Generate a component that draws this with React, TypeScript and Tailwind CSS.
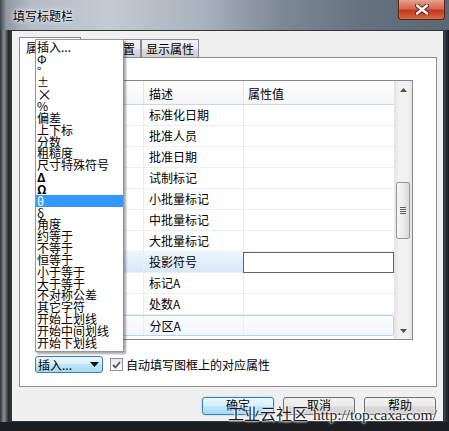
import React from "react";

const rows = [
  "标准化日期",
  "批准人员",
  "批准日期",
  "试制标记",
  "小批量标记",
  "中批量标记",
  "大批量标记",
  "投影符号",
  "标记A",
  "处数A",
  "分区A",
];

const menuItems = [
  "插入...",
  "Φ",
  "°",
  "±",
  "×",
  "%",
  "偏差",
  "上下标",
  "分数",
  "粗糙度",
  "尺寸特殊符号",
  "Δ",
  "Ω",
  "θ",
  "δ",
  "角度",
  "约等于",
  "不等于",
  "恒等于",
  "小于等于",
  "大于等于",
  "不对称公差",
  "其它字符",
  "开始上划线",
  "开始中间划线",
  "开始下划线",
];

function Arrow({ up }: { up?: boolean }) {
  return (
    <svg width="7" height="4" viewBox="0 0 7 4">
      <path d={up ? "M0 4 L3.5 0 L7 4 Z" : "M0 0 L3.5 4 L7 0 Z"} fill="#505050" />
    </svg>
  );
}

function Button({ label, primary }: { label: string; primary?: boolean }) {
  return (
    <div
      className={`flex h-[18px] w-[72px] items-center justify-center rounded-[3px] border leading-none ${
        primary
          ? "border-[#3c7fb1] bg-[linear-gradient(#eaf6fd,#d9f0fc_50%,#bee6fd_50%,#a7d9f5)] shadow-[0_0_2px_#7fc6f0]"
          : "border-[#707070] bg-[linear-gradient(#f2f2f2,#ebebeb_50%,#dddddd_50%,#cfcfcf)]"
      }`}
    >
      <span className="-mt-[2px]">{label}</span>
    </div>
  );
}

export default function App() {
  return (
    <div className="relative h-[431px] w-[449px] overflow-hidden bg-[#1b1e21] font-['Noto_Sans_CJK_SC','Noto_Sans',sans-serif] text-[12px] text-black">
      {/* title bar */}
      <div className="flex h-[30px] bg-[linear-gradient(to_right,#3f444a_0px,#8e98a2_6px,#b3bcc5_30px,#c2cad2_110px,#aab4be_200px,#7d8995_280px,#66727f_360px,#5b6773_449px)]">
        <div className="pl-[13px] pt-[7px] leading-[18px] [text-shadow:0_0_6px_#fff,0_0_3px_#fff]">
          填写标题栏
        </div>
        <div className="ml-auto mr-[4px] flex h-[20px] w-[47px] items-center justify-center rounded-b-[4px] border border-t-0 border-[#5a2016] bg-[linear-gradient(#e9a08e,#d26a50_45%,#c0391f_55%,#d8673f)] shadow-[inset_0_0_1px_#ffd0c0]">
          <svg width="14" height="11" viewBox="0 0 14 11">
            <path
              d="M2 1.5 L12 9.5 M12 1.5 L2 9.5"
              stroke="#5a2016"
              strokeWidth="4.2"
              strokeLinecap="round"
            />
            <path
              d="M2 1.5 L12 9.5 M12 1.5 L2 9.5"
              stroke="#ffffff"
              strokeWidth="2.4"
              strokeLinecap="round"
            />
          </svg>
        </div>
      </div>

      <div className="flex">
        <div className="h-[392px] w-[11px] bg-[linear-gradient(to_right,#2e3236,#8d9196_4px,#4a4e53_7px,#1e2124_9px,#3a4046_11px)]" />

        {/* client area */}
        <div className="flex h-[392px] w-[433px] flex-col border border-[#2f353b] bg-[#f0f0f0] px-[7px] pt-[6px]">
          {/* tabs */}
          <div className="flex h-[20px] items-end">
            <div className="relative z-10 -mb-px flex h-[21px] w-[62px] items-center justify-center border border-b-0 border-[#898c95] bg-white">
              属性编辑
            </div>
            <div className="flex h-[18px] w-[60px] items-center justify-center border border-l-0 border-b-0 border-[#898c95] bg-[linear-gradient(#f3f3f3,#ebebeb_50%,#dddddd_50%,#cfcfcf)] pl-[1px]">
              文本设置
            </div>
            <div className="flex h-[18px] w-[58px] items-center justify-center border border-b-0 border-[#898c95] bg-[linear-gradient(#f3f3f3,#ebebeb_50%,#dddddd_50%,#cfcfcf)]">
              显示属性
            </div>
          </div>

          {/* tab panel */}
          <div className="h-[330px] w-[418px] border border-[#898c95] bg-white pl-[15px] pt-[22px]">
            <div className="flex h-[260px] w-[378px] border border-[#828790] bg-white">
              <div className="flex w-[358px] flex-col">
                <div className="flex h-[24px] border-b border-[#d5d5d5] bg-[linear-gradient(#ffffff,#f4f5f7)] leading-[25px]">
                  <div className="w-[108px] border-r border-[#e3e5e8] pl-[6px]">属性名称</div>
                  <div className="w-[100px] border-r border-[#e3e5e8] pl-[5px]">描述</div>
                  <div className="w-[150px] pl-[4px]">属性值</div>
                </div>
                {rows.map((name, i) => {
                  const selected = i === 7;
                  const hot = i === 10;
                  return (
                    <div
                      key={name}
                      className={`flex h-[21px] leading-[20px] ${
                        hot
                          ? "rounded-[2px] border border-[#b4d3f5] bg-[linear-gradient(#fbfdff,#f1f7fe)]"
                          : "border-b border-[#eeeeee]"
                      }`}
                    >
                      <div
                        className={`w-[108px] border-r border-[#ececec] pl-[6px] ${
                          selected ? "bg-[linear-gradient(#edf5fd,#d7e7f9)]" : ""
                        }`}
                      >
                        {name}
                      </div>
                      <div
                        className={`w-[100px] border-r border-[#ececec] pl-[5px] ${
                          selected ? "bg-[linear-gradient(#edf5fd,#d7e7f9)]" : ""
                        }`}
                      >
                        {name}
                      </div>
                      {selected ? (
                        <div className="-ml-px h-[21px] w-[151px] border border-[#646464] bg-white" />
                      ) : (
                        <div className="w-[150px]" />
                      )}
                    </div>
                  );
                })}
              </div>

              {/* scrollbar */}
              <div className="flex w-[18px] flex-col bg-[linear-gradient(to_right,#e3e3e3,#f3f3f3_30%,#f3f3f3_70%,#e6e6e6)]">
                <div className="flex h-[17px] items-center justify-center">
                  <Arrow up />
                </div>
                <div className="ml-[2px] mt-[84px] flex h-[57px] w-[14px] flex-col items-center justify-center gap-[1px] rounded-[2px] border border-[#979797] bg-[linear-gradient(to_right,#f6f6f6,#ececec_50%,#d9d9d9)]">
                  <div className="h-px w-[6px] bg-[#606060]" />
                  <div className="h-px w-[6px] bg-[#606060]" />
                  <div className="h-px w-[6px] bg-[#606060]" />
                  <div className="h-px w-[6px] bg-[#606060]" />
                </div>
                <div className="flex-1" />
                <div className="flex h-[17px] items-center justify-center">
                  <Arrow />
                </div>
              </div>
            </div>

            {/* combo + checkbox */}
            <div className="mt-[16px] flex h-[17px] items-center">
              <div className="flex h-[17px] w-[68px] items-center rounded-[3px] border border-[#3c7fb1] bg-[linear-gradient(#eaf6fd,#d9f0fc_50%,#bee6fd_50%,#a7d9f5)] pl-[2px] pr-[3px]">
                <span className="flex-1 leading-none">插入...</span>
                <svg width="9" height="5" viewBox="0 0 9 5">
                  <path d="M0 0 L4.5 5 L9 0 Z" fill="#111" />
                </svg>
              </div>
              <div className="ml-[7px] flex h-[13px] w-[13px] items-center justify-center border border-[#8e8f8f] bg-[linear-gradient(#e6e6e6,#ffffff)]">
                <svg width="9" height="8" viewBox="0 0 9 8">
                  <path d="M1 4 L3.5 6.5 L8 1" stroke="#4a5566" strokeWidth="1.8" fill="none" />
                </svg>
              </div>
              <span className="ml-[3px] leading-none">自动填写图框上的对应属性</span>
            </div>
          </div>

          {/* buttons */}
          <div className="mt-[10px] flex justify-end gap-[9px]">
            <Button label="确定" primary />
            <Button label="取消" />
            <Button label="帮助" />
          </div>
        </div>

        <div className="h-[392px] w-[5px] bg-[linear-gradient(to_right,#3b434b,#15191c)]" />
      </div>

      {/* dropdown popup */}
      <div className="absolute left-[35px] top-[39px] z-20 h-[313px] w-[89px] border border-[#979797] bg-white pt-[1px] shadow-[2px_2px_2px_rgba(0,0,0,0.35)]">
        {menuItems.map((item, i) => (
          <div
            key={item}
            className={`h-[11.83px] whitespace-nowrap pl-[1px] leading-[11.83px] ${
              i === 13 ? "bg-[#3399ff] text-white" : ""
            } ${i === 11 || i === 12 ? "font-bold" : ""} ${i === 4 ? "text-[15px]" : ""}`}
          >
            {item}
          </div>
        ))}
      </div>

      {/* watermark */}
      <div className="absolute left-[228px] top-[403px] z-30 flex items-baseline whitespace-nowrap text-[#1c1c1c] [text-shadow:0_0_2px_#fff,0_0_2px_#fff,0_0_3px_#fff]">
        <span className="text-[16px] leading-[20px]">工业云社区</span>
        <span className="ml-[5px] font-['Liberation_Serif',serif] text-[15.5px] leading-[20px]">
          http://top.caxa.com/
        </span>
      </div>
    </div>
  );
}
